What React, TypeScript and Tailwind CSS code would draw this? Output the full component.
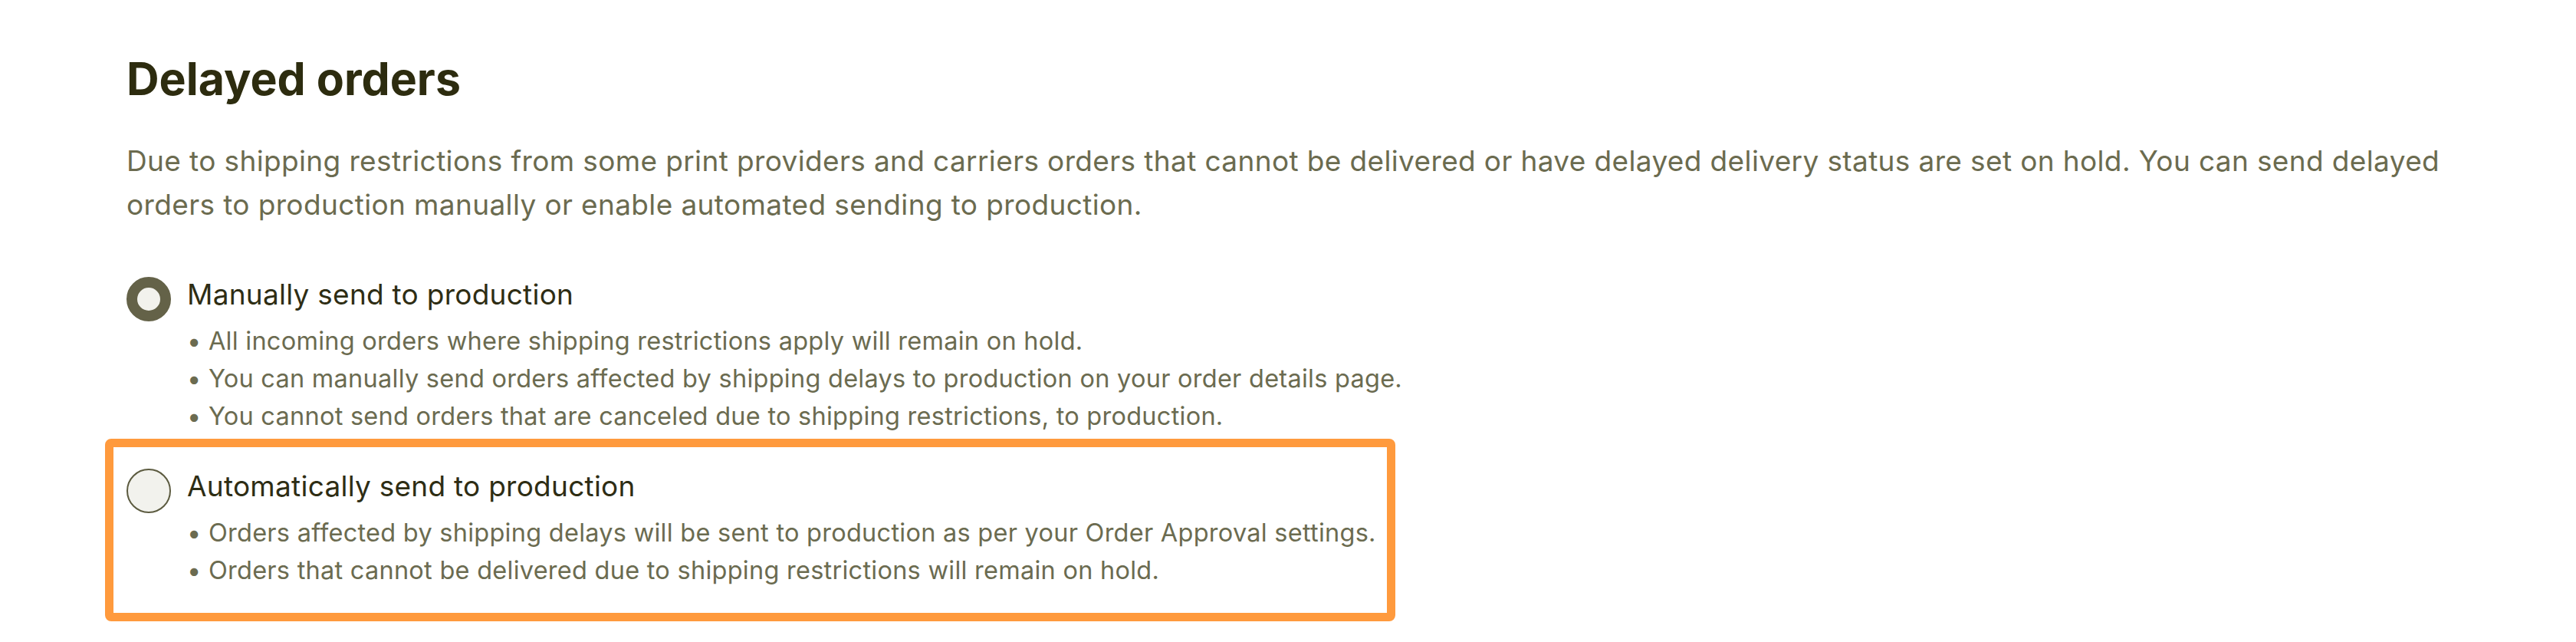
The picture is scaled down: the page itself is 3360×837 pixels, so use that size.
import { useState } from 'react'

type Option = {
  id: string
  title: string
  notes: string[]
}

const options: Option[] = [
  {
    id: 'manual',
    title: 'Manually send to production',
    notes: [
      'All incoming orders where shipping restrictions apply will remain on hold.',
      'You can manually send orders affected by shipping delays to production on your order details page.',
      'You cannot send orders that are canceled due to shipping restrictions, to production.',
    ],
  },
  {
    id: 'auto',
    title: 'Automatically send to production',
    notes: [
      'Orders affected by shipping delays will be sent to production as per your Order Approval settings.',
      'Orders that cannot be delivered due to shipping restrictions will remain on hold.',
    ],
  },
]

function Radio({ checked }: { checked: boolean }) {
  return (
    <span
      className={
        checked
          ? 'block shrink-0 w-[58px] h-[58px] rounded-full border-[14px] border-[#646248] bg-[#f2f2ed]'
          : 'block shrink-0 w-[58px] h-[58px] rounded-full border-2 border-[#5c5b40] bg-[#f2f2ed]'
      }
    />
  )
}

function OptionRow({ option, checked, onSelect }: { option: Option; checked: boolean; onSelect: () => void }) {
  return (
    <label className="flex items-start gap-[21px] cursor-pointer" onClick={onSelect}>
      <span className="pt-px">
        <Radio checked={checked} />
      </span>
      <span className="flex flex-col tracking-[0.016em]">
        <span className="text-[37px] leading-[48px] text-[#2e2d14]">{option.title}</span>
        <ul className="mt-[12px] text-[32.5px] leading-[49px] text-[#6b6b50]">
          {option.notes.map((note) => (
            <li key={note}>• {note}</li>
          ))}
        </ul>
      </span>
    </label>
  )
}

export default function App() {
  const [selected, setSelected] = useState('manual')

  return (
    <div className="min-h-screen bg-white pl-[165px] pr-[140px] pt-[71px] font-['Inter',sans-serif]">
      <h2 className="text-[59px] leading-[64px] font-bold text-[#2d2c0f]">Delayed orders</h2>
      <p className="mt-[46px] text-[37px] leading-[57px] tracking-[0.01em] text-[#6b6b4f]">
        Due to shipping restrictions from some print providers and carriers orders that cannot be delivered or have
        delayed delivery status are set on hold. You can send delayed orders to production manually or enable
        automated sending to production.
      </p>

      <div className="mt-[65px] flex flex-col">
        <OptionRow option={options[0]} checked={selected === 'manual'} onSelect={() => setSelected('manual')} />
        <div className="mt-[5px] -ml-[28px] w-fit rounded-lg border-[11px] border-[#ff9a3d] pl-[17px] pr-[14px] pt-[27px] pb-[31px]">
          <OptionRow option={options[1]} checked={selected === 'auto'} onSelect={() => setSelected('auto')} />
        </div>
      </div>
    </div>
  )
}
